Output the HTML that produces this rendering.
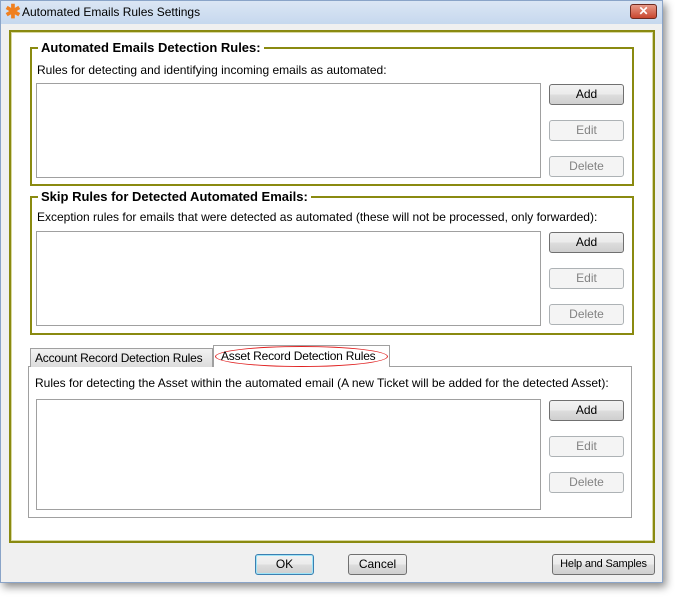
<!DOCTYPE html>
<html><head><style>
*{margin:0;padding:0;box-sizing:border-box}
body{width:675px;height:600px;background:#fff;font-family:"Liberation Sans",sans-serif;font-size:12px;color:#000;position:relative;overflow:hidden}
.a{position:absolute}
.btn{position:absolute;width:75px;height:21px;border:1px solid #707070;border-radius:3px;background:linear-gradient(#f2f2f2,#ebebeb 50%,#dddddd 51%,#cfcfcf);text-align:center;line-height:19px;font-size:12px}
.dis{border-color:#adb2b5;color:#838383;background:#f4f4f4}
.grp{position:absolute;border:2px solid #8a8a10}
.lg{position:absolute;background:#fff;font-weight:bold;font-size:13px;padding:0 3px;top:-9px;left:6px;white-space:nowrap}
.lb{position:absolute;border:1px solid #a0a0a0;background:#fff}
</style></head><body>
<div class="a" style="left:0;top:0;width:663px;height:583px;background:#f0f0f0;border:1px solid #8aa4c8;box-shadow:3px 4px 8px rgba(0,0,0,.45)"></div>
<div class="a" style="left:1px;top:1px;width:661px;height:23px;background:linear-gradient(#dbe6f4,#c6d8ee)"></div>
<div class="a" style="left:5px;top:1px;color:#f08020;font-size:19px;font-weight:bold">✱</div>
<div class="a" style="left:22px;top:5px;font-size:12px">Automated Emails Rules Settings</div>
<div class="a" style="left:630px;top:4px;width:27px;height:15px;border:1px solid #6d2a20;border-radius:3px;background:linear-gradient(#e89a88,#c8462f);color:#fff;font-weight:bold;text-align:center;line-height:13px;font-size:12px">✕</div>
<div class="a" style="left:9px;top:30px;width:646px;height:513px;background:#fff;border:2px solid #8a8a10;box-shadow:inset 0 0 0 1px #d8d8a0"></div>

<div class="grp" style="left:30px;top:47px;width:604px;height:139px"><div class="lg">Automated Emails Detection Rules:</div></div>
<div class="a" style="left:37px;top:63px">Rules for detecting and identifying incoming emails as automated:</div>
<div class="lb" style="left:36px;top:83px;width:505px;height:95px"></div>
<div class="btn" style="left:549px;top:84px">Add</div>
<div class="btn dis" style="left:549px;top:120px">Edit</div>
<div class="btn dis" style="left:549px;top:156px">Delete</div>

<div class="grp" style="left:30px;top:196px;width:604px;height:139px"><div class="lg">Skip Rules for Detected Automated Emails:</div></div>
<div class="a" style="left:37px;top:210px">Exception rules for emails that were detected as automated (these will not be processed, only forwarded):</div>
<div class="lb" style="left:36px;top:231px;width:505px;height:95px"></div>
<div class="btn" style="left:549px;top:232px">Add</div>
<div class="btn dis" style="left:549px;top:268px">Edit</div>
<div class="btn dis" style="left:549px;top:304px">Delete</div>

<div class="a" style="left:28px;top:366px;width:604px;height:152px;border:1px solid #a0a0a0"></div>
<div class="a" style="left:30px;top:348px;width:183px;height:19px;border:1px solid #a0a0a0;border-bottom:none;background:linear-gradient(#f2f2f2,#dcdcdc);padding:2px 4px;white-space:nowrap;font-size:12px;letter-spacing:-0.2px;overflow:hidden">Account Record Detection Rules</div>
<div class="a" style="left:213px;top:345px;width:177px;height:22px;border:1px solid #a0a0a0;border-bottom:none;background:#fff"></div>
<div class="a" style="left:215px;top:346px;width:173px;height:21px;border:1.5px solid #e02020;border-radius:50%;padding:2px 5px;white-space:nowrap;letter-spacing:-0.2px">Asset Record Detection Rules</div>
<div class="a" style="left:35px;top:376px">Rules for detecting the Asset within the automated email (A new Ticket will be added for the detected Asset):</div>
<div class="lb" style="left:36px;top:399px;width:505px;height:111px"></div>
<div class="btn" style="left:549px;top:400px">Add</div>
<div class="btn dis" style="left:549px;top:436px">Edit</div>
<div class="btn dis" style="left:549px;top:472px">Delete</div>

<div class="btn" style="left:255px;top:554px;width:59px;border-color:#3c7fb1;box-shadow:inset 0 0 0 1px #9ee4f7">OK</div>
<div class="btn" style="left:348px;top:554px;width:59px">Cancel</div>
<div class="btn" style="left:552px;top:554px;width:103px;font-size:11px;letter-spacing:-0.2px">Help and Samples</div>
</body></html>
